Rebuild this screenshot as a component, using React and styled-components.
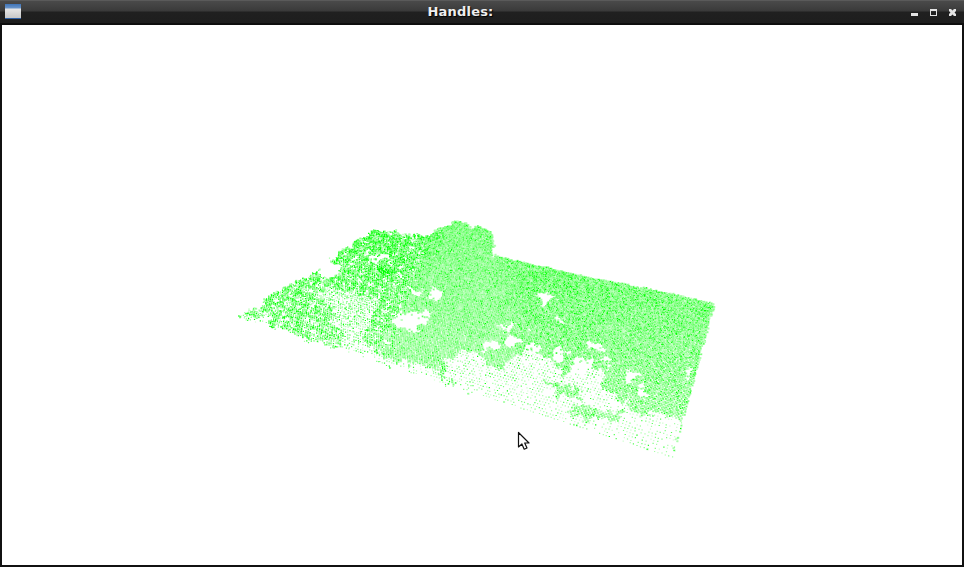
import React, { useMemo } from 'react';
import styled, { createGlobalStyle } from 'styled-components';

const GlobalStyle = createGlobalStyle`
  html, body {
    margin: 0;
    padding: 0;
    background: #fff;
    overflow: hidden;
  }
`;

const Window = styled.div`
  width: 964px;
  height: 567px;
  display: flex;
  flex-direction: column;
  background: #111;
`;

const TitleBar = styled.div`
  height: 25px;
  flex: none;
  display: flex;
  align-items: flex-start;
  padding: 4px 8px 0 5px;
  box-sizing: border-box;
  background: linear-gradient(
    to bottom,
    #6a6a6a 0,
    #4a4a4a 1px,
    #3a3a3a 11px,
    #202020 12px,
    #1e1e1e 23px,
    #0e0e0e 23px
  );
`;

const AppIcon = styled.div`
  width: 16px;
  height: 15px;
  flex: none;
  box-sizing: border-box;
  border-bottom: 1px solid #2f62a8;
  background: linear-gradient(
    to bottom,
    #3f74b8 0,
    #6a94c8 4px,
    #e6e6e6 5px,
    #c8c8c8 100%
  );
`;

const Title = styled.div`
  flex: 1;
  padding-right: 11px;
  text-align: center;
  font-family: 'DejaVu Sans', sans-serif;
  font-weight: bold;
  font-size: 13px;
  letter-spacing: 0.2px;
  line-height: 15px;
  color: #eeeeee;
  text-shadow: 1px 1px 1px #000;
`;

const Controls = styled.div`
  display: flex;
  gap: 12px;
  padding-top: 5px;
  flex: none;
`;

const ControlIcon = styled.svg`
  width: 7px;
  height: 7px;
  display: block;
`;

const Canvas = styled.main`
  position: relative;
  flex: 1;
  margin: 0 2px 2px;
  background: #fff;
`;

const Cloud = styled.svg`
  display: block;
  width: 960px;
  height: 540px;
`;

const Cursor = styled.svg`
  position: absolute;
  left: 514px;
  top: 406px;
  width: 14px;
  height: 21px;
`;

const corners = [
  [238, 316],
  [374, 229],
  [714, 304],
  [672, 457],
];

function makeHomography([p0, p1, p2, p3]) {
  const dx1 = p1[0] - p2[0];
  const dx2 = p3[0] - p2[0];
  const sx = p0[0] - p1[0] + p2[0] - p3[0];
  const dy1 = p1[1] - p2[1];
  const dy2 = p3[1] - p2[1];
  const sy = p0[1] - p1[1] + p2[1] - p3[1];
  const den = dx1 * dy2 - dx2 * dy1;
  const g = (sx * dy2 - dx2 * sy) / den;
  const h = (dx1 * sy - sx * dy1) / den;
  const a = p1[0] - p0[0] + g * p1[0];
  const b = p3[0] - p0[0] + h * p3[0];
  const d = p1[1] - p0[1] + g * p1[1];
  const e = p3[1] - p0[1] + h * p3[1];
  return (u, v) => {
    const w = g * u + h * v + 1;
    return [(a * u + b * v + p0[0]) / w, (d * u + e * v + p0[1]) / w];
  };
}

function inPoly(poly, x, y) {
  let inside = false;
  for (let i = 0, j = poly.length - 1; i < poly.length; j = i++) {
    const [xi, yi] = poly[i];
    const [xj, yj] = poly[j];
    if (yi > y !== yj > y && x < ((xj - xi) * (y - yi)) / (yj - yi) + xi) inside = !inside;
  }
  return inside;
}

const outline = [
  [238, 316], [248, 310], [258, 309], [264, 300], [268, 293], [285, 283], [300, 280],
  [320, 268], [345, 248], [372, 230], [385, 232], [408, 235], [425, 237], [440, 228],
  [458, 221], [472, 226], [488, 231], [493, 244], [490, 255], [587, 277], [660, 291],
  [714, 304], [683, 418], [672, 458],
];

const frontStrip = [
  [238, 320], [250, 319], [262, 318], [268, 326], [285, 336], [305, 342], [335, 349],
  [368, 347], [385, 358], [405, 362], [430, 372], [450, 354], [470, 352], [483, 353],
  [482, 367], [497, 368], [517, 357], [515, 352], [540, 353], [557, 365], [560, 378],
  [585, 365], [603, 370], [603, 387], [627, 403], [637, 413], [684, 419], [672, 460],
];

const looseArea = [
  [306, 290], [322, 288], [350, 290], [376, 298], [370, 320], [362, 332], [370, 348],
  [340, 352], [342, 332], [332, 318], [325, 303],
];

const patches = [
  [[430, 367], [445, 364], [454, 384], [436, 380]],
  [[545, 383], [560, 381], [583, 393], [581, 400], [560, 398]],
  [[567, 411], [585, 404], [600, 410], [623, 414], [615, 420], [590, 420]],
  [[333, 328], [343, 328], [343, 342], [335, 345]],
];

const holes = [
  [397, 322, 7, 5], [410, 322, 13, 9], [418, 315, 9, 6], [435, 293, 5, 5], [416, 292, 4, 5],
  [381, 258, 11, 3], [330, 270, 12, 6], [322, 262, 5, 3], [410, 247, 5, 2], [546, 298, 8, 6],
  [506, 327, 6, 5], [558, 318, 5, 3], [492, 346, 8, 6], [513, 342, 7, 5], [533, 347, 7, 5],
  [597, 347, 10, 5], [558, 355, 9, 5], [583, 365, 10, 8], [631, 376, 9, 4], [641, 389, 4, 6],
  [688, 373, 4, 4], [530, 330, 2, 2], [606, 362, 3, 3], [262, 318, 5, 3], [296, 300, 3, 2],
  [352, 262, 3, 2], [400, 268, 4, 2], [312, 322, 3, 2], [284, 322, 3, 2], [365, 250, 3, 2],
];

const colors = ['#00ff00', '#2cff2c', '#55ff55', '#80ff80', '#a8ffa8', '#ccffcc'];

function pick(rand, weights) {
  let r = rand();
  for (let i = 0; i < weights.length; i++) {
    r -= weights[i];
    if (r <= 0) return i;
  }
  return weights.length - 1;
}

function inHump(x, y) {
  return x > 395 + (300 - y) * 0.42 && x < 500 && y < 365;
}

// lumpy displacement so region edges don't look like straight polygon sides
const wobbleX = (x, y) => 2.4 * Math.sin(x * 0.31 + y * 0.17) + 1.6 * Math.sin(y * 0.53 - x * 0.23);
const wobbleY = (x, y) => 2.4 * Math.sin(y * 0.29 - x * 0.19) + 1.6 * Math.sin(x * 0.47 + y * 0.21);
const mottle = (x, y) => Math.sin(x * 0.37 - y * 0.21) * Math.sin(y * 0.41 + x * 0.13);

const toPath = (pts, len) => pts.map(([x, y]) => `M${x.toFixed(1)} ${y.toFixed(1)}h${len}`).join('');

function buildCloud() {
  let seed = 20240611;
  const rand = () => {
    seed = (seed + 0x6d2b79f5) | 0;
    let t = Math.imul(seed ^ (seed >>> 15), 1 | seed);
    t = (t + Math.imul(t ^ (t >>> 7), 61 | t)) ^ t;
    return ((t ^ (t >>> 14)) >>> 0) / 4294967296;
  };
  const project = makeHomography(corners);
  const buckets = colors.map(() => []);
  const wash = [];

  const plot = (px, py, layer) => {
    const x = px + (rand() - 0.5) * 0.9;
    const y = py + (rand() - 0.5) * 0.9;
    const jx = x + wobbleX(x, y) + (rand() - 0.5) * 2.5;
    const jy = y + wobbleY(x, y) + (rand() - 0.5) * 2.5;
    // the flat right part has a clean edge, only the raised left part is ragged
    const rag = x < 495 ? 0.7 : 0.12;
    const spread = x < 495 ? 3 : 1;
    if (!inPoly(outline, x + wobbleX(y, x) * rag + (rand() - 0.5) * spread, y + wobbleY(y, x) * rag + (rand() - 0.5) * spread)) return;
    const loose = inPoly(looseArea, jx, jy);
    let sparse = inPoly(frontStrip, jx, jy);
    if (patches.some((p) => inPoly(p, jx, jy))) sparse = false;
    if (holes.some(([cx, cy, rx, ry]) => ((jx - cx) / rx) ** 2 + ((jy - cy) / ry) ** 2 < 1)) {
      if (rand() > 0.03) return;
    }
    if (sparse) {
      if (layer > 0 || rand() > 0.72) return;
      buckets[pick(rand, [0.03, 0.03, 0.09, 0.25, 0.35, 0.25])].push([x, y]);
      return;
    }
    if (loose) {
      if (layer > 0 && rand() > 0.15) return;
      if (rand() > 0.8) return;
      buckets[pick(rand, [0.1, 0.1, 0.2, 0.25, 0.25, 0.1])].push([x, y]);
      return;
    }
    if (inHump(jx - rand() * 22, jy)) {
      if (layer > 1) return;
      wash.push([x, y]);
      buckets[pick(rand, [0.02, 0.03, 0.15, 0.4, 0.3, 0.1])].push([x, y]);
      return;
    }
    if (x < 450) {
      const core = ((jx - 382) / 9) ** 2 + ((jy - 270) / 4) ** 2 < 1;
      if (core) {
        buckets[pick(rand, [0.85, 0.15])].push([x, y]);
        return;
      }
      // patchy upper-left part: gaps come and go with the mottle
      if (layer > 1 && rand() > 0.4) return;
      if (rand() < 0.14 + 0.26 * mottle(x, y)) return;
      if (layer === 0 && mottle(x, y) < 0.1) wash.push([x, y]);
      buckets[pick(rand, [0.2, 0.13, 0.17, 0.22, 0.2, 0.08])].push([x, y]);
      return;
    }
    if (layer > 1 && rand() > 0.6) return;
    if (layer < 2) wash.push([x, y]);
    buckets[pick(rand, [0.07, 0.08, 0.22, 0.33, 0.22, 0.08])].push([x, y]);
  };

  const nu = 66;
  const nv = 165;
  for (let i = -2; i <= nu * 1.3; i++) {
    for (let j = 0; j <= nv; j++) {
      const u = i / nu;
      const v = j / nv;
      const [x, y] = project(u, v);
      plot(x, y, 0);
      const [x2, y2] = project(u + 0.5 / nu, v + 0.5 / nv);
      plot(x2, y2, 1);
      const [x3, y3] = project(u + rand() / nu, v + rand() / nv);
      plot(x3, y3, 2);
    }
  }

  return { wash: toPath(wash, 2), points: buckets.map((pts) => toPath(pts, 1.2)) };
}

const PointCloud = () => {
  const { wash, points } = useMemo(buildCloud, []);
  return (
    <Cloud viewBox="2 25 960 540">
      <path d={wash} stroke="#b4ffb4" strokeWidth="2" fill="none" />
      {[...points].reverse().map((d, i) => (
        <path key={i} d={d} stroke={colors[colors.length - 1 - i]} strokeWidth="1.2" fill="none" />
      ))}
    </Cloud>
  );
};

const App = () => {
  return (
    <Window>
      <GlobalStyle />
      <TitleBar>
        <AppIcon />
        <Title>Handles:</Title>
        <Controls>
          <ControlIcon viewBox="0 0 7 7">
            <rect x="0" y="4" width="7" height="3" fill="#e4e4e4" />
          </ControlIcon>
          <ControlIcon viewBox="0 0 7 7">
            <path d="M0 0h7v7H0z M1 2v4h5V2z" fill="#e4e4e4" fillRule="evenodd" />
          </ControlIcon>
          <ControlIcon viewBox="0 0 7 7">
            <path d="M0 0h2l1.5 1.5L5 0h2v2L5.5 3.5 7 5v2H5L3.5 5.5 2 7H0V5l1.5-1.5L0 2z" fill="#e4e4e4" />
          </ControlIcon>
        </Controls>
      </TitleBar>
      <Canvas>
        <PointCloud />
        <Cursor viewBox="0 0 14 21">
          <path
            d="M2.5 1.5V16l3.4-3 2.3 5.2 2.8-1.2-2.3-5H13z"
            fill="#fff"
            stroke="#111"
            strokeWidth="1.2"
            strokeLinejoin="round"
          />
        </Cursor>
      </Canvas>
    </Window>
  );
};

export default App;
